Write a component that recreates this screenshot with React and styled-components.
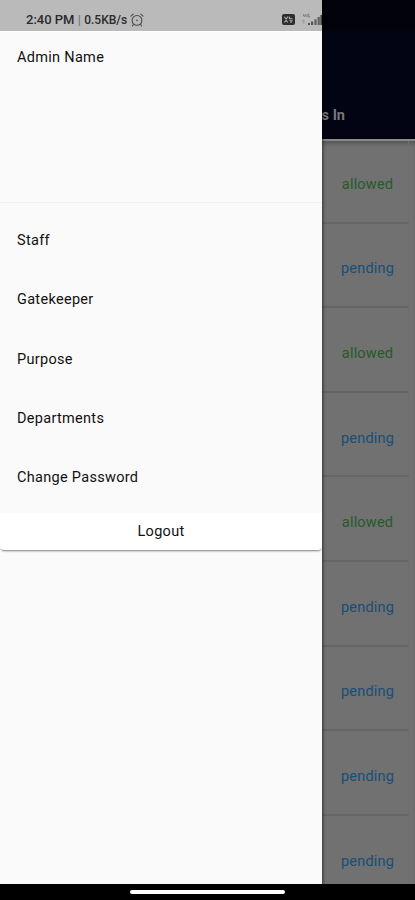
import React from 'react';
import styled, { createGlobalStyle } from 'styled-components'

const menuList = ['Staff', 'Gatekeeper', 'Purpose', 'Departments', 'Change Password']

const visitorList = [
  { id: 1, status: 'allowed' },
  { id: 2, status: 'pending' },
  { id: 3, status: 'allowed' },
  { id: 4, status: 'pending' },
  { id: 5, status: 'allowed' },
  { id: 6, status: 'pending' },
  { id: 7, status: 'pending' },
  { id: 8, status: 'pending' },
  { id: 9, status: 'pending' },
]

const AlarmIcon = () => (
  <svg width="14" height="14" viewBox="0 0 14 14" fill="none" stroke="#4c4c4c" strokeWidth="1.1" strokeLinecap="round">
    <circle cx="7" cy="7.4" r="4.9" />
    <path d="M0.9 3.2 L3.2 1.2 M13.1 3.2 L10.8 1.2 M3.4 11.5 L2.4 12.8 M10.6 11.5 L11.6 12.8" />
    <circle cx="7" cy="7.4" r="0.8" fill="#4c4c4c" stroke="none" />
  </svg>
)

const VolteIcon = () => (
  <svg width="13" height="11" viewBox="0 0 13 11">
    <rect width="13" height="11" rx="2" fill="#2d2d2d" />
    <path d="M2.2 2.8 L4.2 5 L6 2.6 M7.4 2.4 V4.8 H10.6 M2.3 8.4 L4.1 6.4 L5.7 8.4 M7.5 6.7 H10.6 M9 6.7 V9" fill="none" stroke="#b0b0b0" strokeWidth="1.1" />
  </svg>
)

const SignalIcon = () => (
  <svg width="21" height="13" viewBox="0 0 21 13">
    <path d="M2.5 1 V3 H4.5 M4.3 1 V4 M6 1 V4 M8.4 1 H7.2 V4 H8.6 V2.7" fill="none" stroke="#777" strokeWidth="0.8" />
    <path d="M1.5 8 L2.8 6.8 V11 M1.2 8 H3.6" fill="none" stroke="#999" strokeWidth="0.8" />
    <path d="M7 10 h2 v2 h-2 z M10 8.4 h2.2 v3.6 h-2.2 z" fill="#555" />
    <path d="M13.4 6.2 h2.2 v5.8 h-2.2 z M16.6 4 h2.2 v8 h-2.2 z" fill="#606060" />
    <path d="M19.4 2 h1.6 v10 h-1.6 z" fill="#444" />
  </svg>
)

const App = () => {
  return (
    <>
      <GlobalStyle />
      <Screen>
        <Page>
          <PageHeader>
            <StatusShade />
            <TabLabel>Visitors In</TabLabel>
          </PageHeader>
          <VisitorList>
            {visitorList.map((visitor) =>
              <VisitorCard key={visitor.id}>
                <Status $status={visitor.status}>{visitor.status}</Status>
              </VisitorCard>
            )}
          </VisitorList>
        </Page>

        <Drawer>
          <StatusBar>
            <StatusText>2:40 PM <Bar>|</Bar> <Speed>0.5KB/s</Speed></StatusText>
            <AlarmIcon />
            <StatusRight>
              <VolteIcon />
              <SignalIcon />
            </StatusRight>
          </StatusBar>
          <DrawerHeader>Admin Name</DrawerHeader>
          <MenuList>
            {menuList.map((menu) => <MenuItem key={menu}>{menu}</MenuItem>)}
          </MenuList>
          <LogoutButton>Logout</LogoutButton>
        </Drawer>

        <NavigationBar>
          <HomeHandle />
        </NavigationBar>
      </Screen>
    </>
  )
}

const GlobalStyle = createGlobalStyle`
  * {
    box-sizing: border-box;
  }
  body {
    margin: 0;
    background: #000;
    font-family: Roboto, "Liberation Sans", sans-serif;
  }
`
const Screen = styled.div`
  position: relative;
  display: flex;
  flex-direction: column;
  width: 415px;
  height: 900px;
  overflow: hidden;
`
const Page = styled.div`
  flex: 1;
  min-height: 0;
  display: flex;
  flex-direction: column;
  overflow: hidden;
  background: #717171;
`
const PageHeader = styled.div`
  flex: none;
  display: flex;
  flex-direction: column;
  justify-content: space-between;
  height: 139px;
  background: #020413;
`
const StatusShade = styled.div`
  height: 31px;
  background: #01020a;
`
const TabLabel = styled.div`
  padding: 0 70px 14px 0;
  text-align: right;
  font-size: 14.5px;
  line-height: 18px;
  font-weight: 700;
  color: #777;
`
const VisitorList = styled.div`
  flex: none;
  display: flex;
  flex-direction: column;
  padding: 0 6px 0 4px;
  border-top: 2px solid #8a8a8a;
  box-shadow: inset 0 4px 4px -2px #505050;
`
const VisitorCard = styled.div`
  display: flex;
  justify-content: flex-end;
  align-items: center;
  height: 84.6px;
  padding: 8px 14px 0 0;
  border-bottom: 2px solid #656565;
  border-right: 1px solid #6e6e6e;

  &:first-child {
    height: 82.6px;
    padding-top: 6px;
  }
`
const Status = styled.span`
  width: 53px;
  text-align: center;
  font-size: 14.5px;
  letter-spacing: 0.2px;
  font-weight: 400;
  color: ${({ $status }) => $status === 'allowed' ? '#265a29' : '#174e78'};
`
const Drawer = styled.div`
  position: absolute;
  top: 0;
  left: 0;
  width: 322px;
  height: 884px;
  display: flex;
  flex-direction: column;
  background: #fafafa;
  color: #111;
  box-shadow: 0 0 3px 1px rgba(0, 0, 0, 0.55);
  font-size: 14.5px;
  font-weight: 400;
  letter-spacing: 0.3px;
`
const StatusBar = styled.div`
  flex: none;
  display: flex;
  align-items: center;
  height: 31px;
  padding: 8px 0 0 26px;
  background: #bababa;
`
const StatusText = styled.span`
  margin-right: 3px;
  font-size: 13px;
  font-weight: 500;
  letter-spacing: 0;
  white-space: nowrap;
  color: #2b2b2b;
`
const Bar = styled.span`
  color: #777;
`
const Speed = styled.span`
  font-size: 12px;
`
const StatusRight = styled.div`
  display: flex;
  align-items: center;
  gap: 6px;
  margin-left: auto;
`
const DrawerHeader = styled.div`
  flex: none;
  height: 172px;
  padding: 17px 17px 0;
  line-height: 18px;
  border-top: 1px solid #fff;
  border-bottom: 1px solid #f1f1f1;
`
const MenuList = styled.div`
  display: flex;
  flex-direction: column;
  padding: 8px 0 6px;
`
const MenuItem = styled.div`
  display: flex;
  align-items: center;
  height: 59.3px;
  padding: 0 17px;
`
const LogoutButton = styled.button`
  width: 100%;
  height: 37px;
  padding: 0;
  border: none;
  border-radius: 0 0 4px 4px;
  background: #fff;
  box-shadow: 0 2px 2px -1px rgba(0, 0, 0, 0.5);
  color: inherit;
  font: inherit;
  letter-spacing: inherit;
  cursor: pointer;
`
const NavigationBar = styled.div`
  position: relative;
  flex: none;
  display: flex;
  justify-content: center;
  height: 16px;
  padding-top: 6px;
  background: #000;
`
const HomeHandle = styled.div`
  width: 155px;
  height: 4px;
  border-radius: 2px;
  background: #fff;
`
export default App
